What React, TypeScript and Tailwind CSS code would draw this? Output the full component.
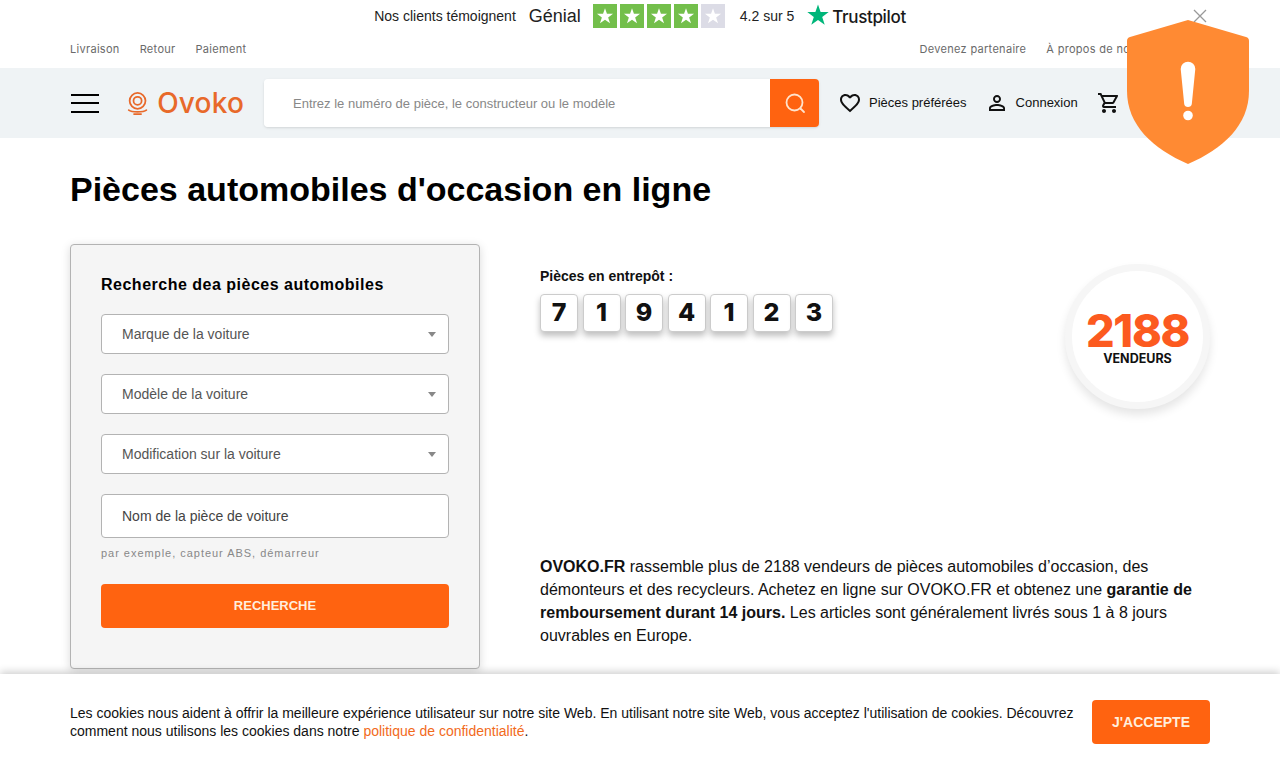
import { MdFavoriteBorder, MdPersonOutline, MdOutlineShoppingCart } from "react-icons/md";

const sans = "font-['Liberation_Sans',Arial,sans-serif]";
const mont = "font-['Inter',sans-serif]";

function Star({ className }: { className: string }) {
  return (
    <svg viewBox="0 0 24 24" className={className} fill="currentColor">
      <path d="M12 1.5l2.6 7.6h8.1l-6.5 4.8 2.5 7.8L12 16.9l-6.7 4.8 2.5-7.8L1.3 9.1h8.1z" />
    </svg>
  );
}

function Logo() {
  return (
    <svg viewBox="0 0 24 26" className="w-[23px] h-[25px]" fill="none" stroke="#e8692a" strokeWidth="2">
      <circle cx="12" cy="10" r="9" />
      <circle cx="12" cy="10" r="4.6" />
      <path d="M2 20.5c2 1.6 4 2 10 2s8-.4 10-2" strokeLinecap="round" />
      <path d="M8 25h8" strokeLinecap="round" />
    </svg>
  );
}

function Shield() {
  return (
    <svg viewBox="0 0 122 144" className="w-[122px] h-[144px]">
      <path d="M61 0L119 17c2 .6 3 2 3 4v50c0 34-26 58-61 73C26 129 0 105 0 71V21c0-2 1-3.400 3-4z" fill="#ff8a33" />
      <path d="M53.700 49a7.300 7.300 0 0 1 14.600 0L64.800 84c-.2 2-1.800 3-3.800 3s-3.600-1-3.800-3z" fill="#fff" />
      <circle cx="61" cy="95.500" r="4.800" fill="#fff" />
    </svg>
  );
}

function SelectBox({ label }: { label: string }) {
  return (
    <div className="h-10 bg-white border border-[#b3b3b3] rounded flex items-center justify-between pl-5 pr-3 text-[14px] text-[#555]">
      <span>{label}</span>
      <span className="w-0 h-0 border-l-4 border-r-4 border-t-[5px] border-l-transparent border-r-transparent border-t-[#888]" />
    </div>
  );
}

export default function App() {
  const digits = ["7", "1", "9", "4", "1", "2", "3"];
  return (
    <div className={`relative h-screen overflow-hidden bg-white text-black ${sans}`}>
      {/* top strip */}
      <div className="h-[32px] flex items-center justify-center text-[14px] text-[#222]">
        <span>Nos clients témoignent</span>
        <span className="ml-[13px] text-[18px]">Génial</span>
        <div className="ml-3 flex gap-[3px]">
          {[0, 1, 2, 3].map((i) => (
            <div key={i} className="w-[24px] h-[24px] bg-[#73bf4b] flex items-center justify-center">
              <Star className="w-[18px] h-[18px] text-white" />
            </div>
          ))}
          <div className="w-[24px] h-[24px] bg-[#dcdce6] flex items-center justify-center">
            <Star className="w-[18px] h-[18px] text-white" />
          </div>
        </div>
        <span className="ml-[15px]">4.2 sur 5</span>
        <div className="ml-[12px] flex items-center">
          <Star className="w-[24px] h-[24px] text-[#00b67a] -mt-[2px]" />
          <span className={`text-[17px] font-medium text-[#191919] tracking-[-0.35px] ml-[2px] mt-[3px] ${mont}`}>Trustpilot</span>
        </div>
      </div>

      {/* secondary links */}
      <div className={`h-[36px] pb-[2px] pl-[70px] pr-[137px] flex items-center justify-between text-[11px] tracking-[0.3px] text-[#6a6a6a] ${mont}`}>
        <div className="flex gap-5">
          <span>Livraison</span>
          <span>Retour</span>
          <span>Paiement</span>
        </div>
        <div className="flex gap-5">
          <span>Devenez partenaire</span>
          <span>À propos de nous</span>
        </div>
      </div>

      {/* header */}
      <div className="h-[70px] bg-[#eff3f5] px-[70px] flex items-center">
        <div className="ml-[1px] w-[28px] flex flex-col gap-[6.500px]">
          <div className="h-[2px] bg-black" />
          <div className="h-[2px] bg-black" />
          <div className="h-[2px] bg-black" />
        </div>
        <div className="ml-[28px] flex items-center gap-[9px] w-[117px]">
          <Logo />
          <span className={`text-[28px] font-medium tracking-[0.2px] text-[#e8692a] leading-none ${mont}`}>Ovoko</span>
        </div>
        <div className="ml-[20px] w-[555px] h-[48px] flex rounded shadow-sm">
          <div className="flex-1 bg-white rounded-l pl-[29px] pt-[1px] flex items-center text-[13px] text-[#888]">
            Entrez le numéro de pièce, le constructeur ou le modèle
          </div>
          <div className="w-[49px] bg-[#ff6310] rounded-r flex items-center justify-center">
            <svg viewBox="0 0 24 24" className="w-[24px] h-[24px]" fill="none" stroke="#ffe3cc" strokeWidth="1.800">
              <circle cx="11.500" cy="11.500" r="8" />
              <path d="M17.500 17.500L21 21" strokeLinecap="round" />
            </svg>
          </div>
        </div>
        <div className="ml-[19px] flex items-center text-[13px] text-[#111]">
          <MdFavoriteBorder className="w-[24px] h-[24px]" />
          <span className="ml-[7px]">Pièces préférées</span>
          <MdPersonOutline className="ml-[18px] w-[24px] h-[24px]" />
          <span className="ml-[7px]">Connexion</span>
          <MdOutlineShoppingCart className="ml-[19px] w-[24px] h-[24px]" />
        </div>
      </div>

      {/* main */}
      <div className="px-[70px]">
        <h1 className="mt-[29px] text-[34px] leading-[44px] font-bold">Pièces automobiles d'occasion en ligne</h1>
        <div className="mt-[33px] flex">
          <div className="w-[410px] h-[425px] shrink-0 bg-[#f5f5f5] border border-[#b3b3b3] rounded px-[30px] pt-[30px] shadow-[0_2px_10px_rgba(0,0,0,0.15)]">
            <h2 className="text-[16px] leading-[20px] font-bold tracking-[0.5px]">Recherche dea pièces automobiles</h2>
            <div className="mt-[19px] flex flex-col gap-5">
              <SelectBox label="Marque de la voiture" />
              <SelectBox label="Modèle de la voiture" />
              <SelectBox label="Modification sur la voiture" />
              <div className="h-[44px] bg-white border border-[#b3b3b3] rounded flex items-center pl-5 text-[14px] text-[#444]">
                Nom de la pièce de voiture
              </div>
            </div>
            <p className="mt-[8px] text-[11px] leading-[14px] tracking-[0.97px] text-[#888]">par exemple, capteur ABS, démarreur</p>
            <div className="mt-[24px] h-[44px] bg-[#ff6310] rounded flex items-center justify-center text-[13px] font-bold text-[#ffeedd]">
              RECHERCHE
            </div>
          </div>

          <div className="ml-[60px] flex-1">
            <div className="h-[311px] flex justify-between">
              <div className="pt-[23px]">
                <p className="text-[14px] leading-[18px] font-bold text-[#111]">Pièces en entrepôt :</p>
                <div className={`mt-[9px] flex gap-[4.500px] ${mont}`}>
                  {digits.map((d, i) => (
                    <div key={i} className="w-[38px] h-[38px] bg-white border border-[#ccc] rounded flex items-center justify-center text-[25px] font-extrabold text-[#111] shadow-[0_4px_6px_rgba(0,0,0,0.25)]">
                      {d}
                    </div>
                  ))}
                </div>
              </div>
              <div className="mt-[20px] w-[145px] h-[145px] rounded-full bg-white border-[7px] border-[#f6f6f6] shadow-[0_6px_10px_rgba(0,0,0,0.1)] flex flex-col items-center justify-center">
                <span className={`text-[45px] leading-[46px] font-extrabold tracking-[-1.3px] text-[#fc5a1f] ${mont}`}>2188</span>
                <span className={`text-[12.500px] leading-[14px] font-bold text-[#111] -mt-[2px] ${mont}`}>VENDEURS</span>
              </div>
            </div>
            <p className="text-[16px] leading-[23px] text-[#111]">
              <b>OVOKO.FR</b> rassemble plus de 2188 vendeurs de pièces automobiles d’occasion, des démonteurs et des recycleurs. Achetez en ligne sur OVOKO.FR et obtenez une <b>garantie de remboursement durant 14 jours.</b> Les articles sont généralement livrés sous 1 à 8 jours ouvrables en Europe.
            </p>
          </div>
        </div>
      </div>

      {/* cookie bar */}
      <div className="absolute left-0 right-0 bottom-0 h-[94px] pt-[2px] bg-white shadow-[0_-2px_8px_rgba(0,0,0,0.2)] px-[70px] flex items-center justify-between">
        <p className="w-[1010px] text-[14px] leading-[18px] text-[#111]">
          Les cookies nous aident à offrir la meilleure expérience utilisateur sur notre site Web. En utilisant notre site Web, vous acceptez l'utilisation de cookies. Découvrez comment nous utilisons les cookies dans notre <span className="text-[#f26a1b]">politique de confidentialité</span>.
        </p>
        <div className="w-[118px] h-[44px] bg-[#ff6310] rounded flex items-center justify-center text-[14px] font-bold text-[#ffeedd]">
          J'ACCEPTE
        </div>
      </div>

      {/* overlays */}
      <svg viewBox="0 0 14 14" className="absolute left-[1193px] top-[9px] w-[14px] h-[14px]" stroke="#999" strokeWidth="1.300" fill="none">
        <path d="M1 1l12 12M13 1L1 13" />
      </svg>
      <div className="absolute left-[1127px] top-[20px]">
        <Shield />
      </div>
    </div>
  );
}
